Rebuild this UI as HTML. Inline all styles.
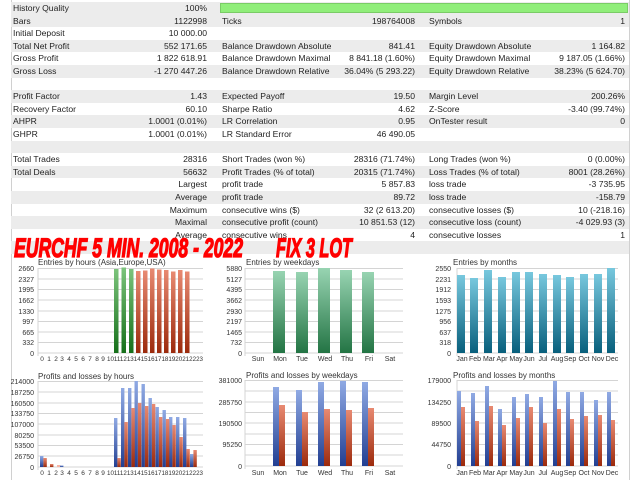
<!DOCTYPE html>
<html><head><meta charset="utf-8"><style>
body{margin:0;width:640px;height:480px;background:#fff;overflow:hidden;position:relative;font-family:"Liberation Sans",Arial,sans-serif;color:#222}
.r{position:absolute;left:11px;width:618px;height:12.6px;font-size:8.6px;line-height:12.6px}
.g{background:#ececec}
.r span{position:absolute;white-space:nowrap}
.a{left:2px}.b{right:422px}.c{left:211px}.d{right:214px}.e{left:418px}.f{right:4px}
.vl{position:absolute;top:0;width:1px;height:480px;background:#d0d0d0}
</style></head><body>
<div class="vl" style="left:11px"></div><div class="vl" style="left:629px"></div>
<div class="r g" style="top:2px"><span class="a">History Quality</span><span class="b">100%</span><div style="position:absolute;left:209px;top:1px;width:408px;height:10px;background:#90ee7a;border:1px solid #7acc66;box-sizing:border-box"></div></div>
<div class="r g" style="top:14.6px"><span class="a">Bars</span><span class="b">1122998</span><span class="c">Ticks</span><span class="d">198764008</span><span class="e">Symbols</span><span class="f">1</span></div>
<div class="r" style="top:27.2px"><span class="a">Initial Deposit</span><span class="b">10 000.00</span></div>
<div class="r g" style="top:39.8px"><span class="a">Total Net Profit</span><span class="b">552 171.65</span><span class="c">Balance Drawdown Absolute</span><span class="d">841.41</span><span class="e">Equity Drawdown Absolute</span><span class="f">1 164.82</span></div>
<div class="r" style="top:52.4px"><span class="a">Gross Profit</span><span class="b">1 822 618.91</span><span class="c">Balance Drawdown Maximal</span><span class="d">8 841.18 (1.60%)</span><span class="e">Equity Drawdown Maximal</span><span class="f">9 187.05 (1.66%)</span></div>
<div class="r g" style="top:65px"><span class="a">Gross Loss</span><span class="b">-1 270 447.26</span><span class="c">Balance Drawdown Relative</span><span class="d">36.04% (5 293.22)</span><span class="e">Equity Drawdown Relative</span><span class="f">38.23% (5 624.70)</span></div>
<div class="r" style="top:77.6px"></div>
<div class="r g" style="top:90.2px"><span class="a">Profit Factor</span><span class="b">1.43</span><span class="c">Expected Payoff</span><span class="d">19.50</span><span class="e">Margin Level</span><span class="f">200.26%</span></div>
<div class="r" style="top:102.8px"><span class="a">Recovery Factor</span><span class="b">60.10</span><span class="c">Sharpe Ratio</span><span class="d">4.62</span><span class="e">Z-Score</span><span class="f">-3.40 (99.74%)</span></div>
<div class="r g" style="top:115.4px"><span class="a">AHPR</span><span class="b">1.0001 (0.01%)</span><span class="c">LR Correlation</span><span class="d">0.95</span><span class="e">OnTester result</span><span class="f">0</span></div>
<div class="r" style="top:128px"><span class="a">GHPR</span><span class="b">1.0001 (0.01%)</span><span class="c">LR Standard Error</span><span class="d">46 490.05</span></div>
<div class="r g" style="top:140.6px"></div>
<div class="r" style="top:153.2px"><span class="a">Total Trades</span><span class="b">28316</span><span class="c">Short Trades (won %)</span><span class="d">28316 (71.74%)</span><span class="e">Long Trades (won %)</span><span class="f">0 (0.00%)</span></div>
<div class="r g" style="top:165.8px"><span class="a">Total Deals</span><span class="b">56632</span><span class="c">Profit Trades (% of total)</span><span class="d">20315 (71.74%)</span><span class="e">Loss Trades (% of total)</span><span class="f">8001 (28.26%)</span></div>
<div class="r" style="top:178.4px"><span class="b">Largest</span><span class="c">profit trade</span><span class="d">5 857.83</span><span class="e">loss trade</span><span class="f">-3 735.95</span></div>
<div class="r g" style="top:191px"><span class="b">Average</span><span class="c">profit trade</span><span class="d">89.72</span><span class="e">loss trade</span><span class="f">-158.79</span></div>
<div class="r" style="top:203.6px"><span class="b">Maximum</span><span class="c">consecutive wins ($)</span><span class="d">32 (2 613.20)</span><span class="e">consecutive losses ($)</span><span class="f">10 (-218.16)</span></div>
<div class="r g" style="top:216.2px"><span class="b">Maximal</span><span class="c">consecutive profit (count)</span><span class="d">10 851.53 (12)</span><span class="e">consecutive loss (count)</span><span class="f">-4 029.93 (3)</span></div>
<div class="r" style="top:228.8px"><span class="b">Average</span><span class="c">consecutive wins</span><span class="d">4</span><span class="e">consecutive losses</span><span class="f">1</span></div>
<div class="r g" style="top:241.4px"></div>

<svg width="640" height="480" style="position:absolute;left:0;top:0" font-family="Liberation Sans, Arial, sans-serif">
<defs>
<linearGradient id="gg" x1="0" y1="0" x2="0" y2="1"><stop offset="0" stop-color="#7cc47c"/><stop offset="1" stop-color="#16701a"/></linearGradient>
<linearGradient id="rr" x1="0" y1="0" x2="0" y2="1"><stop offset="0" stop-color="#e88a72"/><stop offset="1" stop-color="#9c2a0c"/></linearGradient>
<linearGradient id="gw" x1="0" y1="0" x2="0" y2="1"><stop offset="0" stop-color="#98d4b2"/><stop offset="1" stop-color="#237444"/></linearGradient>
<linearGradient id="bm" x1="0" y1="0" x2="0" y2="1"><stop offset="0" stop-color="#78c8de"/><stop offset="1" stop-color="#085f7c"/></linearGradient>
<linearGradient id="bb" x1="0" y1="0" x2="0" y2="1"><stop offset="0" stop-color="#90aae4"/><stop offset="1" stop-color="#223f92"/></linearGradient>
</defs>
<text x="14" y="257" fill="#ff0000" stroke="#ff0000" stroke-width="1.3" font-family="Liberation Sans Narrow, Liberation Sans, sans-serif" font-weight="bold" font-style="italic" font-size="27" textLength="229" lengthAdjust="spacingAndGlyphs">EURCHF  5 MIN.  2008 - 2022</text>
<text x="276" y="257" fill="#ff0000" stroke="#ff0000" stroke-width="1.3" font-family="Liberation Sans Narrow, Liberation Sans, sans-serif" font-weight="bold" font-style="italic" font-size="27" textLength="76" lengthAdjust="spacingAndGlyphs">FIX 3 LOT</text>

<g font-size="8" fill="#333">
<text x="38" y="265">Entries by hours (Asia,Europe,USA)</text>
<text x="246" y="265">Entries by weekdays</text>
<text x="453" y="265">Entries by months</text>
<text x="38" y="379">Profits and losses by hours</text>
<text x="246" y="378">Profits and losses by weekdays</text>
<text x="453" y="378">Profits and losses by months</text>
</g>

<g stroke="#d4d4d4" stroke-width="1">
<path d="M38 268.5H203M38 279H203M38 289.5H203M38 300H203M38 311H203M38 321.5H203M38 332H203M38 342.5H203M38 353H203"/>
<path d="M245 268.5H403M245 279H403M245 289.5H403M245 300H403M245 311H403M245 321.5H403M245 332H403M245 342.5H403M245 353H403"/>
<path d="M457 268.5H618M457 279H618M457 289.5H618M457 300H618M457 311H618M457 321.5H618M457 332H618M457 342.5H618M457 353H618"/>
<path d="M38 381.5H203M38 392H203M38 403H203M38 413.5H203M38 424H203M38 435H203M38 445.5H203M38 456H203M38 467H203"/>
<path d="M245 380.5H403M245 391H403M245 402H403M245 412.5H403M245 423H403M245 434H403M245 444.5H403M245 455H403M245 466H403"/>
<path d="M457 380.5H618M457 391H618M457 402H618M457 412.5H618M457 423H618M457 434H618M457 444.5H618M457 455H618M457 466H618"/>
<path d="M38 268V356M245 268V356M457 268V356M38 381V470M245 380V469M457 380V469"/>
</g>

<g font-size="7" fill="#333" text-anchor="end">
<text x="34" y="271">2660</text><text x="34" y="282">2327</text><text x="34" y="292">1995</text><text x="34" y="303">1662</text><text x="34" y="314">1330</text><text x="34" y="324">997</text><text x="34" y="335">665</text><text x="34" y="345">332</text><text x="34" y="356">0</text>
<text x="242" y="271">5880</text><text x="242" y="282">5127</text><text x="242" y="292">4395</text><text x="242" y="303">3662</text><text x="242" y="314">2930</text><text x="242" y="324">2197</text><text x="242" y="335">1465</text><text x="242" y="345">732</text><text x="242" y="356">0</text>
<text x="451" y="271">2550</text><text x="451" y="282">2231</text><text x="451" y="292">1912</text><text x="451" y="303">1593</text><text x="451" y="314">1275</text><text x="451" y="324">956</text><text x="451" y="335">637</text><text x="451" y="345">318</text><text x="451" y="356">0</text>
<text x="34" y="384">214000</text><text x="34" y="395">187250</text><text x="34" y="406">160500</text><text x="34" y="416">133750</text><text x="34" y="427">107000</text><text x="34" y="438">80250</text><text x="34" y="448">53500</text><text x="34" y="459">26750</text><text x="34" y="470">0</text>
<text x="242" y="383">381000</text><text x="242" y="405">285750</text><text x="242" y="426">190500</text><text x="242" y="447">95250</text><text x="242" y="469">0</text>
<text x="451" y="383">179000</text><text x="451" y="405">134250</text><text x="451" y="426">89500</text><text x="451" y="447">44750</text><text x="451" y="469">0</text>
</g>

<g>
<rect x="114" y="269" width="4.5" height="84" fill="url(#gg)"/>
<rect x="121.5" y="267.5" width="4.5" height="85.5" fill="url(#gg)"/>
<rect x="129" y="269" width="4.5" height="84" fill="url(#gg)"/>
<rect x="136" y="271" width="4.5" height="82" fill="url(#rr)"/>
<rect x="143" y="270.5" width="4.5" height="82.5" fill="url(#rr)"/>
<rect x="150" y="268.5" width="4.5" height="84.5" fill="url(#rr)"/>
<rect x="157" y="269.5" width="4.5" height="83.5" fill="url(#rr)"/>
<rect x="164" y="270" width="4.5" height="83" fill="url(#rr)"/>
<rect x="171" y="271.5" width="4.5" height="81.5" fill="url(#rr)"/>
<rect x="178" y="270" width="4.5" height="83" fill="url(#rr)"/>
<rect x="185" y="271.5" width="4.5" height="81.5" fill="url(#rr)"/>
</g>
<g font-size="6.5" fill="#333" text-anchor="middle">
<text x="42" y="361">0</text><text x="49" y="361">1</text><text x="56" y="361">2</text><text x="62" y="361">3</text><text x="69" y="361">4</text><text x="76" y="361">5</text><text x="83" y="361">6</text><text x="90" y="361">7</text><text x="97" y="361">8</text><text x="103" y="361">9</text>
<text x="107" y="361" text-anchor="start" textLength="96" lengthAdjust="spacingAndGlyphs">1011121314151617181920212223</text>
</g>
<g>
<rect x="273" y="271" width="12" height="82" fill="url(#gw)"/>
<rect x="296" y="272" width="12" height="81" fill="url(#gw)"/>
<rect x="318" y="268" width="12" height="85" fill="url(#gw)"/>
<rect x="340" y="270" width="12" height="83" fill="url(#gw)"/>
<rect x="362" y="272" width="12" height="81" fill="url(#gw)"/>
</g>
<g font-size="7" fill="#333" text-anchor="middle">
<text x="258" y="361">Sun</text><text x="280" y="361">Mon</text><text x="302" y="361">Tue</text><text x="325" y="361">Wed</text><text x="347" y="361">Thu</text><text x="369" y="361">Fri</text><text x="390" y="361">Sat</text>
<text x="258" y="475">Sun</text><text x="280" y="475">Mon</text><text x="302" y="475">Tue</text><text x="325" y="475">Wed</text><text x="347" y="475">Thu</text><text x="369" y="475">Fri</text><text x="390" y="475">Sat</text>
</g>
<g fill="url(#bm)">
<rect x="457" y="275" width="8" height="78"/><rect x="470" y="278" width="8" height="75"/><rect x="484" y="270" width="8" height="83"/><rect x="498" y="277" width="8" height="76"/><rect x="512" y="272" width="8" height="81"/><rect x="525" y="272" width="8" height="81"/><rect x="539" y="274" width="8" height="79"/><rect x="553" y="275" width="8" height="78"/><rect x="566" y="277" width="8" height="76"/><rect x="580" y="274" width="8" height="79"/><rect x="594" y="274" width="8" height="79"/><rect x="607" y="268" width="8" height="85"/>
</g>
<g font-size="7" fill="#333" text-anchor="middle">
<text x="462" y="361">Jan</text><text x="475" y="361">Feb</text><text x="489" y="361">Mar</text><text x="502" y="361">Apr</text><text x="516" y="361">May</text><text x="529" y="361">Jun</text><text x="543" y="361">Jul</text><text x="557" y="361">Aug</text><text x="570" y="361">Sep</text><text x="584" y="361">Oct</text><text x="598" y="361">Nov</text><text x="612" y="361">Dec</text>
<text x="462" y="475">Jan</text><text x="475" y="475">Feb</text><text x="489" y="475">Mar</text><text x="502" y="475">Apr</text><text x="516" y="475">May</text><text x="529" y="475">Jun</text><text x="543" y="475">Jul</text><text x="557" y="475">Aug</text><text x="570" y="475">Sep</text><text x="584" y="475">Oct</text><text x="598" y="475">Nov</text><text x="612" y="475">Dec</text>
</g>
<g>
<rect x="40" y="456" width="3.4" height="11" fill="url(#bb)"/><rect x="43.4" y="458" width="3.4" height="9" fill="url(#rr)"/>
<rect x="50" y="464" width="3.4" height="3" fill="url(#rr)"/><rect x="57" y="465" width="3.4" height="2" fill="#f5b5a5"/><rect x="60" y="465.5" width="3.4" height="1.5" fill="url(#bb)"/>
<g fill="url(#bb)">
<rect x="114" y="418" width="3.4" height="49"/><rect x="121" y="388" width="3.4" height="79"/><rect x="128" y="388" width="3.4" height="79"/><rect x="134.5" y="381" width="3.4" height="86"/><rect x="141.5" y="384" width="3.4" height="83"/><rect x="148.5" y="398" width="3.4" height="69"/><rect x="155.5" y="407" width="3.4" height="60"/><rect x="162.5" y="410" width="3.4" height="57"/><rect x="169" y="417" width="3.4" height="50"/><rect x="176" y="417" width="3.4" height="50"/><rect x="183" y="418" width="3.4" height="49"/><rect x="190" y="454" width="3.4" height="13"/>
</g>
<g fill="url(#rr)">
<rect x="117.4" y="458" width="3.4" height="9"/><rect x="124.4" y="422" width="3.4" height="45"/><rect x="131.4" y="408" width="3.4" height="59"/><rect x="137.9" y="403" width="3.4" height="64"/><rect x="144.9" y="406" width="3.4" height="61"/><rect x="151.9" y="404" width="3.4" height="63"/><rect x="158.9" y="417" width="3.4" height="50"/><rect x="165.9" y="419" width="3.4" height="48"/><rect x="172.4" y="425" width="3.4" height="42"/><rect x="179.4" y="437" width="3.4" height="30"/><rect x="186.4" y="449" width="3.4" height="18"/><rect x="193.4" y="450" width="3.4" height="17"/>
</g>
</g>
<g font-size="6.5" fill="#333" text-anchor="middle">
<text x="42" y="475">0</text><text x="49" y="475">1</text><text x="56" y="475">2</text><text x="62" y="475">3</text><text x="69" y="475">4</text><text x="76" y="475">5</text><text x="83" y="475">6</text><text x="90" y="475">7</text><text x="97" y="475">8</text><text x="103" y="475">9</text>
<text x="107" y="475" text-anchor="start" textLength="96" lengthAdjust="spacingAndGlyphs">1011121314151617181920212223</text>
</g>
<g>
<rect x="273" y="387" width="6" height="79" fill="url(#bb)"/><rect x="279" y="405" width="6" height="61" fill="url(#rr)"/>
<rect x="296" y="390" width="6" height="76" fill="url(#bb)"/><rect x="302" y="412" width="6" height="54" fill="url(#rr)"/>
<rect x="318" y="382" width="6" height="84" fill="url(#bb)"/><rect x="324" y="409" width="6" height="57" fill="url(#rr)"/>
<rect x="340" y="381" width="6" height="85" fill="url(#bb)"/><rect x="346" y="410" width="6" height="56" fill="url(#rr)"/>
<rect x="362" y="382" width="6" height="84" fill="url(#bb)"/><rect x="368" y="408" width="6" height="58" fill="url(#rr)"/>
</g>
<g fill="url(#bb)">
<rect x="457" y="391" width="4" height="75"/><rect x="471" y="393" width="4" height="73"/><rect x="485" y="386" width="4" height="80"/><rect x="498" y="409" width="4" height="57"/><rect x="512" y="397" width="4" height="69"/><rect x="525" y="394" width="4" height="72"/><rect x="539" y="397" width="4" height="69"/><rect x="553" y="381" width="4" height="85"/><rect x="566" y="392" width="4" height="74"/><rect x="580" y="392" width="4" height="74"/><rect x="594" y="400" width="4" height="66"/><rect x="607" y="392" width="4" height="74"/>
</g>
<g fill="url(#rr)">
<rect x="461" y="407" width="4" height="59"/><rect x="475" y="421" width="4" height="45"/><rect x="489" y="406" width="4" height="60"/><rect x="502" y="425" width="4" height="41"/><rect x="516" y="418" width="4" height="48"/><rect x="529" y="407" width="4" height="59"/><rect x="543" y="423" width="4" height="43"/><rect x="557" y="409" width="4" height="57"/><rect x="570" y="419" width="4" height="47"/><rect x="584" y="416" width="4" height="50"/><rect x="598" y="415" width="4" height="51"/><rect x="611" y="420" width="4" height="46"/>
</g>
</svg>
</body></html>
